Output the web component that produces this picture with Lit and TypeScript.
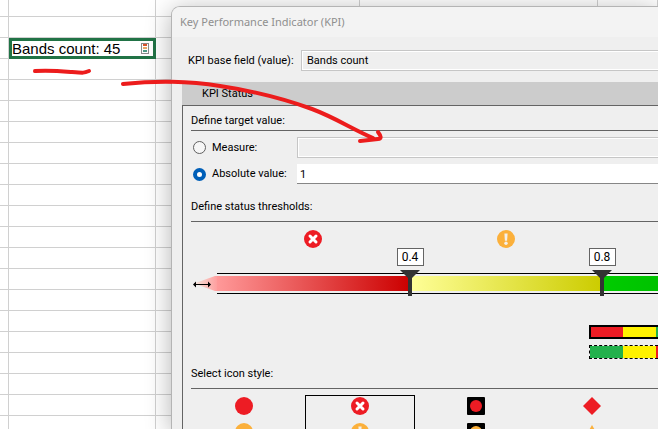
import { LitElement, html, svg, css } from "lit";
import { customElement, property } from "lit/decorators.js";
import { styleMap } from "lit/directives/style-map.js";

const RED = "#ed1c24";
const AMBER = "#fbb03b";

const glyphs: Record<string, unknown> = {
  dot: svg`<circle cx="9" cy="9" r="9" fill=${RED} />`,
  dotAmber: svg`<circle cx="9" cy="9" r="9" fill=${AMBER} />`,
  cross: svg`<circle cx="9" cy="9" r="9" fill=${RED} />
    <path d="M6 6 12 12M12 6 6 12" stroke="#fff" stroke-width="3" stroke-linecap="round" />`,
  alert: svg`<circle cx="9" cy="9" r="9" fill=${AMBER} />
    <path d="M7.4 3.6h3.2l-.5 7.2H7.9z" fill="#f4f0ea" /><circle cx="9" cy="13.3" r="1.7" fill="#f4f0ea" />`,
  lamp: svg`<rect width="18" height="18" rx="1" fill="#000" /><circle cx="9" cy="9" r="6" fill=${RED} />`,
  lampAmber: svg`<rect width="18" height="18" rx="1" fill="#000" /><circle cx="9" cy="9" r="6" fill=${AMBER} />`,
  diamond: svg`<path d="M9 0 18 9 9 18 0 9z" fill=${RED} />`,
  triangle: svg`<path d="M9 2 18 18H0z" fill=${AMBER} />`,
};

@customElement("kpi-icon")
export class KpiIcon extends LitElement {
  @property() name = "dot";
  static styles = css`
    :host { display: block; width: 18px; height: 18px; }
    svg { display: block; }
  `;
  render() {
    return html`<svg width="18" height="18" viewBox="0 0 18 18" aria-hidden="true">${glyphs[this.name]}</svg>`;
  }
}

@customElement("sheet-grid")
export class SheetGrid extends LitElement {
  static styles = css`
    :host { display: block; overflow: hidden; background: #fff; }
    table { width: 100%; table-layout: fixed; border-collapse: separate; border-spacing: 0; }
    .c0 { width: 9px; }
    .c1 { width: 147px; }
    .c2 { width: 204px; }
    .c3 { width: 238px; }
    td { box-sizing: border-box; height: 21px; padding: 0; border: solid #d0d0d0; border-width: 0 1px 1px 0; }
    .first td { height: 17px; }
    td.selected { border: 3px solid #217346; }
    .cell { display: flex; align-items: center; justify-content: space-between; height: 15px; padding: 0 4px 0 0;
      font: 15px/17px "Liberation Sans", Arial, sans-serif; color: #000; white-space: nowrap; }
    svg { display: block; }
  `;
  render() {
    const rows = Array.from({ length: 21 }, (_, i) => i);
    return html`<table>
      <colgroup><col class="c0" /><col class="c1" /><col class="c2" /><col class="c3" /><col /></colgroup>
      <tbody>
        ${rows.map((r) => html`<tr class=${r === 0 ? "first" : ""}>
          <td></td>
          ${r === 2
            ? html`<td class="selected"><div class="cell"><span>Bands count: 45</span>
                <svg width="8" height="11" viewBox="0 0 8 11" aria-hidden="true">
                  <rect x=".5" y=".5" width="7" height="10" fill="#fff" stroke="#8c8c8c" />
                  <path d="M2 1h4v2H2z" fill="#d9532c" /><path d="M2 4h4v2H2z" fill="#e8a868" />
                  <path d="M2 7h4v2H2z" fill="#4f9a86" />
                </svg></div></td>`
            : html`<td></td>`}
          <td></td><td></td><td></td>
        </tr>`)}
      </tbody>
    </table>`;
  }
}

@customElement("threshold-scale")
export class ThresholdScale extends LitElement {
  static styles = css`
    :host { display: block; }
    .icons { display: flex; gap: 175px; padding-left: 113px; }
    .scale { position: relative; margin-top: 25px; height: 21px; display: flex; overflow: visible; }
    .tip { flex: none; width: 26px; height: 21px; }
    .track { flex: 1; box-sizing: border-box; display: flex; padding: 2px 0; border: solid #000; border-width: 1px 0; }
    .band { flex: none; width: 192px; }
    .low { background: linear-gradient(90deg, #ff9999, #cc0000); }
    .mid { background: linear-gradient(90deg, #ffff99, #cccc00); }
    .high { flex: 1; background: linear-gradient(90deg, #00cc00, #00aa00); }
    .marker { position: absolute; top: -25px; width: 28px; display: flex; flex-direction: column; align-items: center; }
    input { box-sizing: border-box; width: 27px; height: 18px; padding: 0; border: 1px solid #646464; border-radius: 0;
      background: #fff; color: #000; text-align: center; font: 12px/16px Roboto, sans-serif; }
    .pin { display: block; margin-top: 4px; }
    .legend { display: flex; flex-direction: column; gap: 6px; margin: 31px 0 0 398px; }
    .swatch { box-sizing: border-box; height: 14px; display: flex; border: 2px solid #000; border-right: 0; }
    .swatch i { flex: none; width: 33px; }
    .swatch i:first-child { width: 32px; }
    .dashed { border: 1px dashed #000; border-right: 0; }
    .dashed i:first-child { width: 33px; }
    .r { background: #ed1c24; }
    .y { background: #fff200; }
    .g { background: #22b14c; }
    .swatch i:last-child { flex: 1; }
  `;
  private marker(value: string, left: number) {
    return html`<div class="marker" style=${styleMap({ left: `${left}px` })}>
      <input aria-label="Threshold" .value=${value} />
      <svg class="pin" width="20" height="26" viewBox="0 0 20 26" aria-hidden="true">
        <path d="M0 0h20L12 8v18H8V8z" fill="#333" />
      </svg>
    </div>`;
  }
  render() {
    return html`
      <div class="icons"><kpi-icon name="cross"></kpi-icon><kpi-icon name="alert"></kpi-icon></div>
      <div class="scale">
        <svg class="tip" viewBox="0 0 26 21" aria-hidden="true">
          <defs><linearGradient id="fade"><stop offset="0" stop-color="#f3e6dc" /><stop offset="1" stop-color="#ff9f9f" /></linearGradient></defs>
          <path d="M3 10.5 24 3H26V18H24z" fill="url(#fade)" />
          <path d="M4 11.5h14" stroke="#000" stroke-width="1" />
          <path d="M2 11.5 5 8.500v6zM20 11.5 17 8.500v6z" fill="#000" />
        </svg>
        <div class="track"><div class="band low"></div><div class="band mid"></div><div class="band high"></div></div>
        ${this.marker("0.4", 205)} ${this.marker("0.8", 397)}
      </div>
      <div class="legend">
        <div class="swatch"><i class="r"></i><i class="y"></i><i class="g"></i></div>
        <div class="swatch dashed"><i class="g"></i><i class="y"></i><i class="r"></i></div>
      </div>`;
  }
}

@customElement("kpi-dialog")
export class KpiDialog extends LitElement {
  static styles = css`
    :host { display: flex; flex-direction: column; box-sizing: border-box; overflow: hidden; background: #efefef;
      border: solid #b4b4b4; border-width: 1px 0 0 1px; border-radius: 9px 0 0 0;
      box-shadow: 0 4px 26px rgba(0, 0, 0, 0.3); color: #000; font: 11px/16px Roboto, sans-serif; }
    .title { height: 30px; margin: 0; padding-left: 8px; background: #f3f3f3; color: #8f8f8f;
      font: 11px/30px "Noto Sans", sans-serif; white-space: nowrap; }
    .base { display: flex; align-items: center; margin-top: 13px; padding-left: 16px; }
    .base label { width: 113px; white-space: nowrap; }
    input.text { flex: 1; min-width: 0; box-sizing: border-box; height: 21px; margin: 0; padding: 0 5px; border-radius: 0;
      border: solid #c6c6c6; border-width: 1px 0 1px 1px; background: #efefef; color: #000; font: inherit;
      box-shadow: inset 1px 1px #fff, inset 0 -1px #fff; outline: 0; }
    input.value { height: 20px; padding: 0 3px; border-color: #fff #fff #868686; border-left: 0; background: #fff; box-shadow: none; }
    .tabs { margin: 11px 0 0 10px; height: 23px; background: #ccc; }
    .tab { height: 23px; margin: 0; padding: 0 20px; border: 0; background: none; color: #000; font: inherit; }
    .panel { flex: 1; margin-left: 10px; padding: 7px 0 0 8px; border: solid #646464; border-width: 1px 0 0 1px; }
    h2 { margin: 0; height: 17px; border-bottom: 1px solid #646464; font: inherit; white-space: nowrap; }
    .row { display: flex; align-items: center; margin-top: 6px; padding-left: 2px; }
    .row label { width: 85px; white-space: nowrap; }
    .row input[type="radio"] { appearance: none; box-sizing: border-box; flex: none; width: 13px; height: 13px; margin: 0 6px 0 0;
      border: 1px solid #606060; border-radius: 50%; background: #f6f6f6; }
    .row input[type="radio"]:checked { border: 4px solid #005fb8; background: #fff; }
    h2.section { height: 22px; margin-top: 15px; }
    threshold-scale { margin-top: 8px; }
    h2.styles { margin-top: 7px; }
    .choices { display: flex; gap: 6px; margin: 6px 0 0 -2px; overflow: hidden; }
    .choice { flex: none; box-sizing: border-box; width: 110px; height: 84px; display: flex; flex-direction: column; align-items: center;
      gap: 8px; padding: 1px 0; border: 1px solid transparent; background: none; }
    .chosen { border-color: #000; }
  `;
  render() {
    const styles = [["dot", "dotAmber"], ["cross", "alert"], ["lamp", "lampAmber"], ["diamond", "triangle"]];
    return html`
      <h1 class="title">Key Performance Indicator (KPI)</h1>
      <div class="base"><label for="base">KPI base field (value):</label>
        <input id="base" class="text" readonly .value=${"Bands count"} /></div>
      <div class="tabs" role="tablist"><button class="tab" role="tab" aria-selected="true">KPI Status</button></div>
      <div class="panel">
        <h2>Define target value:</h2>
        <div class="row"><input type="radio" name="target" id="measure" /><label for="measure">Measure:</label>
          <input class="text" aria-label="Measure" disabled /></div>
        <div class="row"><input type="radio" name="target" id="absolute" checked /><label for="absolute">Absolute value:</label>
          <input class="text value" aria-label="Absolute value" .value=${"1"} /></div>
        <h2 class="section">Define status thresholds:</h2>
        <threshold-scale></threshold-scale>
        <h2 class="section styles">Select icon style:</h2>
        <div class="choices">
          ${styles.map((s, i) => html`<button class="choice ${i === 1 ? "chosen" : ""}" aria-label="Icon style ${i + 1}">
            ${s.map((n) => html`<kpi-icon name=${n}></kpi-icon>`)}</button>`)}
        </div>
      </div>`;
  }
}

@customElement("app-root")
export class AppRoot extends LitElement {
  static styles = css`
    :host { display: block; position: relative; height: 100vh; overflow: hidden; }
    sheet-grid { height: 100%; }
    kpi-dialog { position: absolute; inset: 6px 0 0 171px; }
    .ink { position: absolute; top: 0; left: 0; pointer-events: none; }
  `;
  render() {
    return html`
      <sheet-grid></sheet-grid>
      <kpi-dialog role="dialog"></kpi-dialog>
      <svg class="ink" width="400" height="160" viewBox="0 0 400 160" fill="none" stroke="#ec1c1c" stroke-width="4"
        stroke-linecap="round" stroke-linejoin="round" aria-hidden="true">
        <path d="M35 71C49 70 60 71 72 72S84 73 89 71" />
        <path d="M123 84C160 80 190 81 220 86C260 92 290 101 312 109C336 118 352 129 373 138" />
        <path d="M378 132C381 136 382 139 378 139L360 141" />
      </svg>`;
  }
}
